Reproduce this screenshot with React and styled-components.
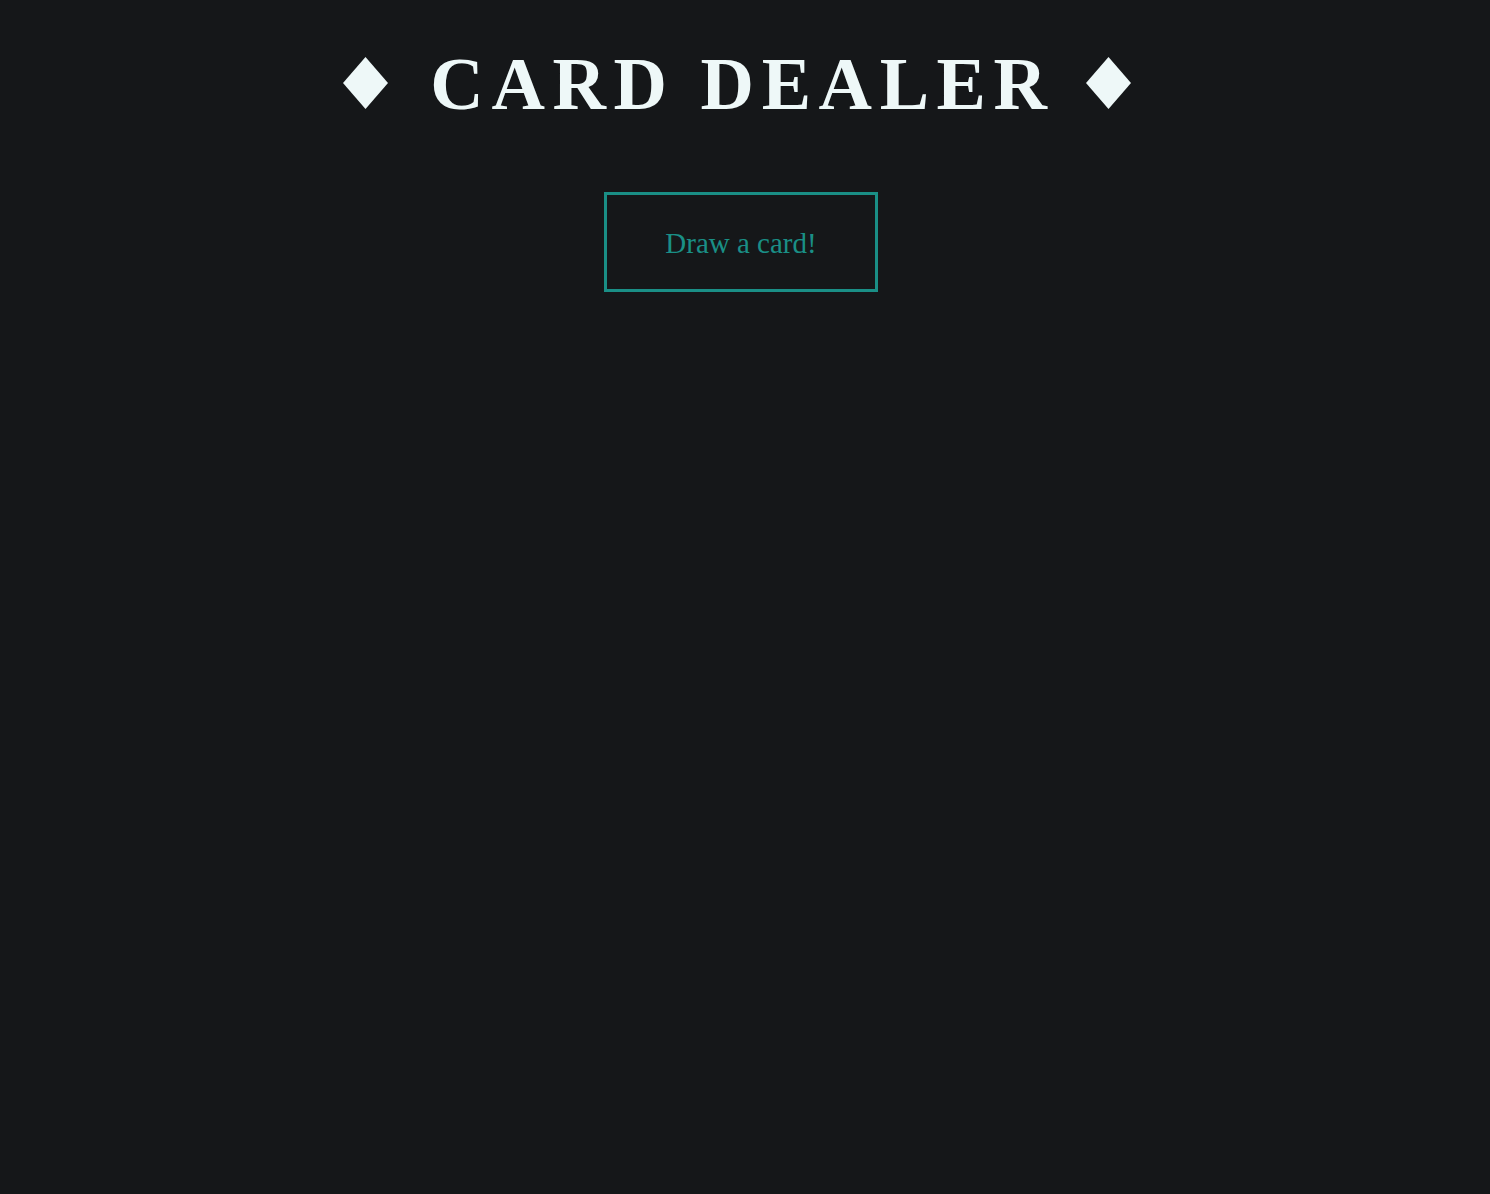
import React from 'react'
import styled, { createGlobalStyle } from 'styled-components'

const GlobalStyle = createGlobalStyle`
  html, body {
    margin: 0;
    padding: 0;
    background: #151719;
    min-height: 100%;
  }

  body {
    font-family: "Liberation Serif", "Times New Roman", serif;
  }
`

const Page = styled.main`
  min-height: 100vh;
  display: flex;
  flex-direction: column;
  align-items: center;
  padding: 40px 8px 0 0;
  box-sizing: border-box;
`

const Title = styled.h1`
  margin: 0 8px 0 0;
  display: flex;
  align-items: baseline;
  font-family: "Liberation Serif", "Times New Roman", serif;
  font-weight: 700;
  font-size: 74px;
  line-height: 88px;
  letter-spacing: 7.6px;
  color: #eef8f8;
  white-space: nowrap;
`

const Suit = styled.svg`
  width: 45px;
  height: 52px;
  flex: none;
  align-self: flex-end;
  margin-bottom: 19px;
  margin-left: ${({ $left }) => $left || 0}px;
  margin-right: ${({ $right }) => $right || 0}px;
  fill: #eef8f8;
`

const DrawButton = styled.button`
  margin-top: 64px;
  width: 274px;
  height: 100px;
  box-sizing: border-box;
  background: transparent;
  border: 3px solid #1a8f86;
  color: #1a8f86;
  font-family: "Liberation Serif", "Times New Roman", serif;
  font-size: 29px;
  padding: 2px 0 0;
  cursor: pointer;
`

function Diamond(props) {
  return (
    <Suit viewBox="0 0 45 52" {...props}>
      <polygon points="22.5,0 45,26 22.5,52 0,26" />
    </Suit>
  )
}

export default function App() {
  return (
    <>
      <GlobalStyle />
      <Page>
        <Title>
          <Diamond $right={42} />
          <span>CARD DEALER</span>
          <Diamond $left={31} />
        </Title>
        <DrawButton type="button">Draw a card!</DrawButton>
      </Page>
    </>
  )
}
